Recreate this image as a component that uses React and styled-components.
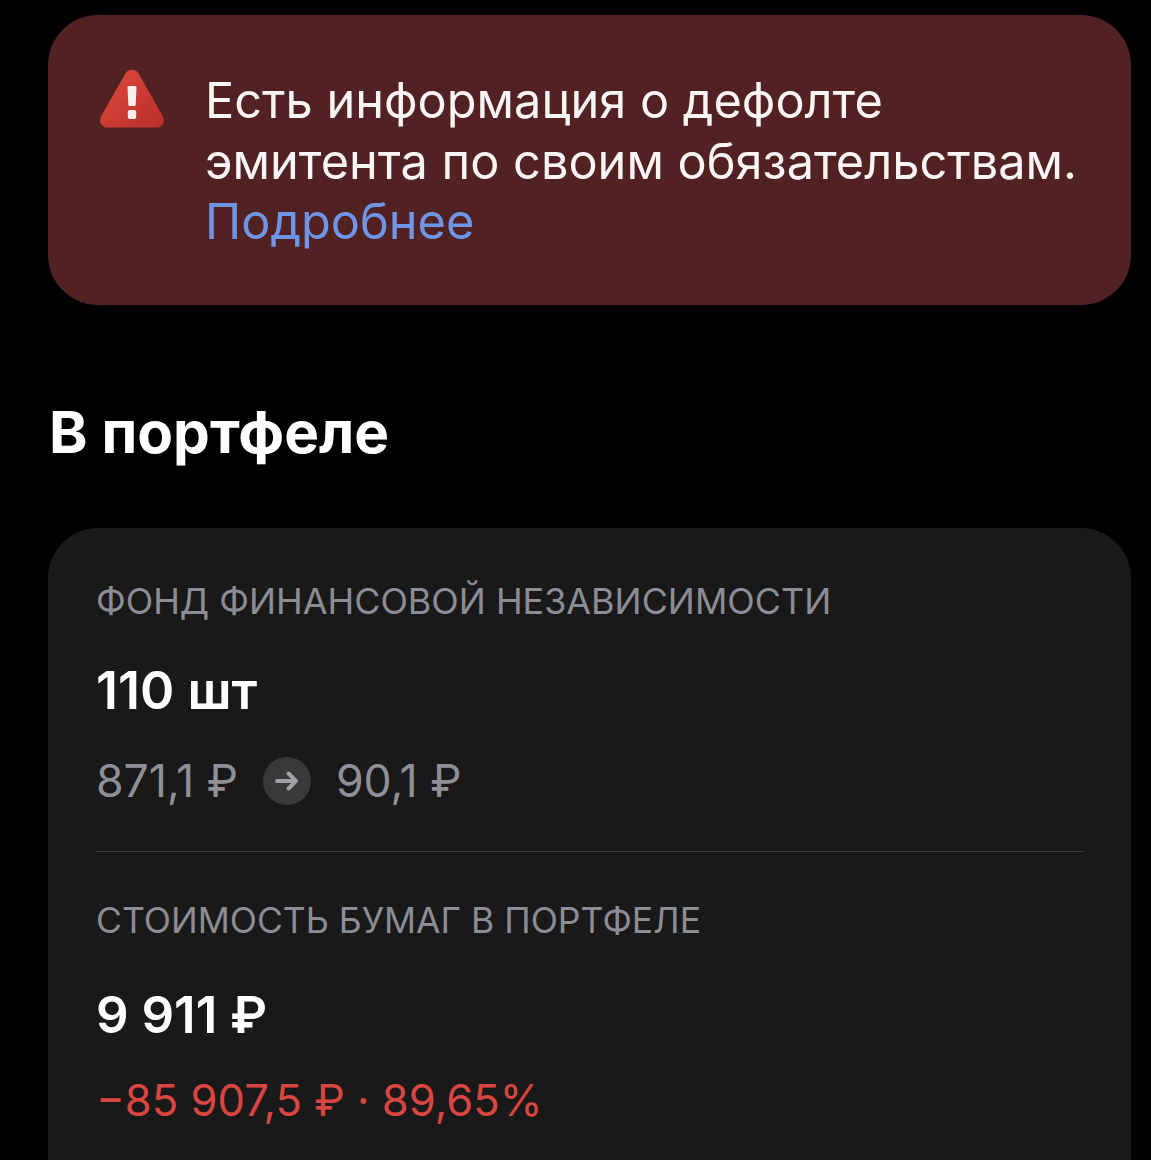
import React from "react";
import styled, { createGlobalStyle } from "styled-components";

const GlobalStyle = createGlobalStyle`
  html, body {
    margin: 0;
    background: #000;
  }
`;

const Page = styled.div`
  height: 1160px;
  overflow: hidden;
  padding: 15px 20px 0 48px;
  box-sizing: border-box;
  background: #000;
  font-family: Inter, "Liberation Sans", sans-serif;
`;

const Alert = styled.div`
  height: 290px;
  box-sizing: border-box;
  padding: 56px 20px 0 51px;
  display: flex;
  gap: 40px;
  background: #522222;
  border-radius: 50px;
`;

const AlertIcon = styled.svg`
  flex: none;
  width: 66px;
  height: 60px;
  margin-top: -2px;
`;

const AlertText = styled.div`
  font-size: 48.7px;
  line-height: 60.5px;
  color: #faf5f5;
  white-space: pre-line;
`;

const MoreLink = styled.a`
  color: #6f95e6;
  display: block;
`;

const Heading = styled.h2`
  margin: 97px 0 66px 1px;
  font-size: 58.4px;
  line-height: 60px;
  font-weight: 700;
  color: #fff;
`;

const Card = styled.section`
  height: 700px;
  box-sizing: border-box;
  padding: 51px 48px 0 48px;
  background: #19191a;
  border-radius: 50px;
`;

const Group = styled.div`
  padding-bottom: ${({ $last }) => ($last ? 0 : "43px")};
  border-bottom: ${({ $last }) => ($last ? "none" : "1px solid #3a3a3c")};
  margin-bottom: ${({ $last }) => ($last ? 0 : "47px")};
`;

const Label = styled.div`
  font-size: ${({ $size }) => $size}px;
  line-height: 44px;
  color: #8c8c94;
`;

const Value = styled.div`
  margin-top: ${({ $gap }) => $gap}px;
  font-size: ${({ $size }) => $size}px;
  line-height: 56px;
  font-weight: 600;
  color: #fff;
`;

const Sub = styled.div`
  margin-top: ${({ $gap }) => $gap}px;
  display: flex;
  align-items: center;
  gap: 25px;
  font-size: ${({ $danger }) => ($danger ? "43.6px" : "44.6px")};
  line-height: 54px;
  color: ${({ $danger }) => ($danger ? "#d9453f" : "#8f8f96")};
`;

const ArrowBadge = styled.span`
  width: 48px;
  height: 48px;
  border-radius: 50%;
  background: #39393b;
  display: flex;
  align-items: center;
  justify-content: center;
`;

const WarningIcon = () => (
  <AlertIcon viewBox="0 0 66 60">
    <defs>
      <linearGradient id="warn" x1="0" y1="0" x2="1" y2="1">
        <stop offset="0" stopColor="#e04a3e" />
        <stop offset="1" stopColor="#b82f2a" />
      </linearGradient>
    </defs>
    <path
      d="M26.5 4.500c3-5 10-5 13 0l24.500 43c2.600 5-.6 11-6.500 11H8.500c-5.900 0-9.100-6-6.500-11z"
      fill="url(#warn)"
    />
    <path d="M28.500 18.500a1.500 1.500 0 0 1 1.500-1.500h6a1.500 1.500 0 0 1 1.500 1.500l-.8 17a1.500 1.500 0 0 1-1.500 1.500h-4.400a1.500 1.500 0 0 1-1.500-1.500z" fill="#fbeeee" />
    <rect x="28.800" y="41" width="8.400" height="9" rx="2" fill="#fbeeee" />
  </AlertIcon>
);

const Arrow = () => (
  <svg width="24" height="24" viewBox="0 0 24 24" fill="none">
    <path
      d="M2 12h19M13.500 4.500 21 12l-7.500 7.500"
      stroke="#a0a0a6"
      strokeWidth="4"
      strokeLinecap="round"
      strokeLinejoin="round"
    />
  </svg>
);

const App = () => {
  return (
    <Page>
      <GlobalStyle />
      <Alert>
        <WarningIcon />
        <AlertText>
          {"Есть информация о дефолте\nэмитента по своим обязательствам."}
          <MoreLink>Подробнее</MoreLink>
        </AlertText>
      </Alert>
      <Heading>В портфеле</Heading>
      <Card>
        <Group>
          <Label $size={35.9}>ФОНД ФИНАНСОВОЙ НЕЗАВИСИМОСТИ</Label>
          <Value $gap={40} $size={52}>110 шт</Value>
          <Sub $gap={35}>
            <span>871,1 ₽</span>
            <ArrowBadge>
              <Arrow />
            </ArrowBadge>
            <span>90,1 ₽</span>
          </Sub>
        </Group>
        <Group $last>
          <Label $size={35.5}>СТОИМОСТЬ БУМАГ В ПОРТФЕЛЕ</Label>
          <Value $gap={44} $size={51}>9 911 ₽</Value>
          <Sub $gap={31} $danger>−85 907,5 ₽ · 89,65%</Sub>
        </Group>
      </Card>
    </Page>
  );
};

export default App;
